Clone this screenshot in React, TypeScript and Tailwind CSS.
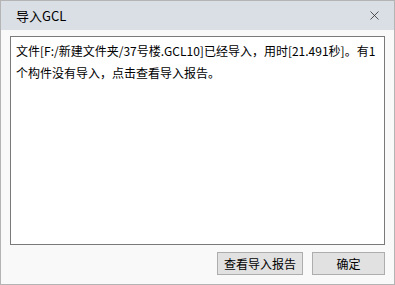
import { X } from "lucide-react";

const FONT = { fontFamily: '"Microsoft YaHei", "Noto Sans CJK SC", sans-serif' };

export default function App() {
  return (
    <div
      className="w-[395px] h-[285px] flex flex-col bg-[#f9f9f9] border border-[#b4b4b4] text-[12px] text-black"
      style={FONT}
    >
      {/* Title bar */}
      <div className="h-[29px] flex items-center justify-between pl-[15px] pr-[12px] bg-[#dadee5] shrink-0">
        <span className="text-[13px] leading-none">导入GCL</span>
        <X className="w-[15px] h-[15px] text-[#333]" strokeWidth={1.3} />
      </div>

      {/* Message box */}
      <div className="flex-1 flex flex-col px-[9px] pt-[6px] pb-[7px]">
        <div className="h-[209px] bg-white border border-[#7a7a7a] px-[5px] pt-[3px] leading-[22px] text-[12px]">
          文件[F:/新建文件夹/37号楼.GCL10]已经导入，用时[21.491秒]。有1个构件没有导入，点击查看导入报告。
        </div>

        {/* Buttons */}
        <div className="flex justify-end gap-[9px] mt-[7px]">
          <button className="w-[86px] h-[23px] bg-[#e1e1e1] border border-[#adadad] text-[12px] leading-none">
            查看导入报告
          </button>
          <button className="w-[73px] h-[23px] bg-[#e1e1e1] border border-[#adadad] text-[12px] leading-none">
            确定
          </button>
        </div>
      </div>
    </div>
  );
}
